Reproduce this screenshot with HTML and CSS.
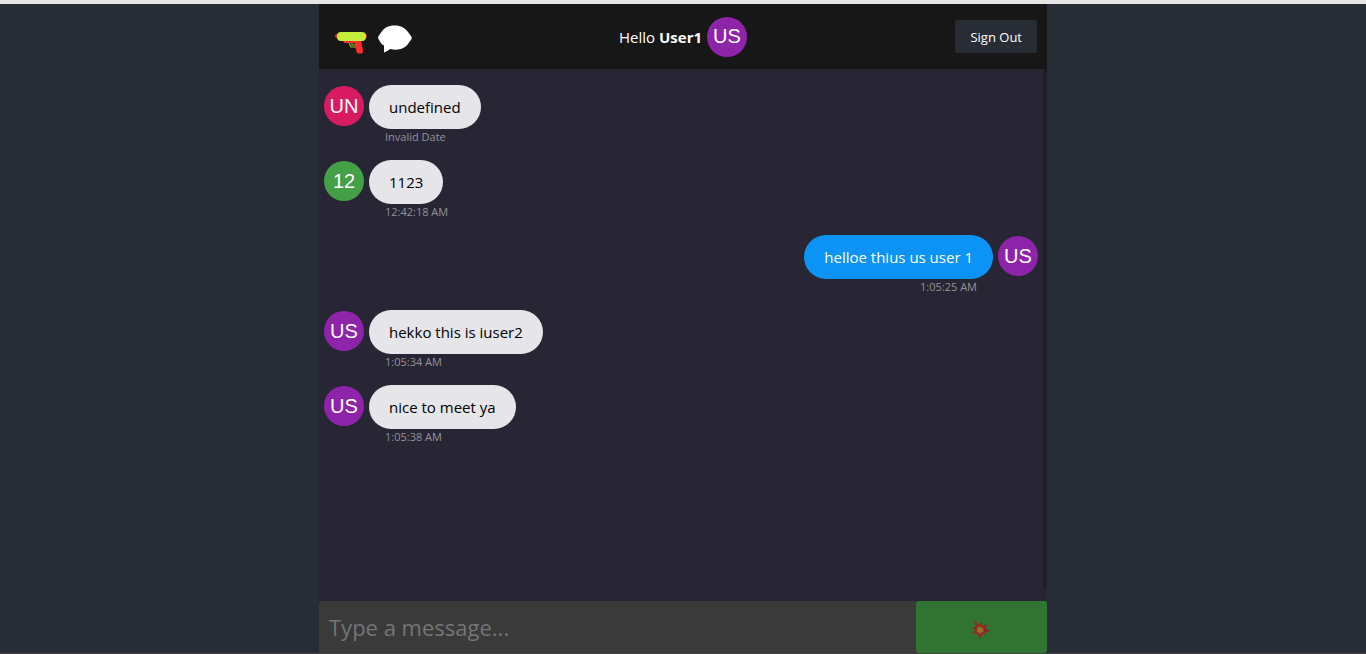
FILE: index.html
```html
<!DOCTYPE html>
<html lang="en">
<head>
    <meta charset="UTF-8">
    <meta name="viewport" content="width=device-width, initial-scale=1.0">
    <title>Chat</title>
    <link rel="stylesheet" href="styles.css">
</head>
<body>
    <div class="app">
        <header class="header">
            <div class="logo">
                <svg width="32" height="32" viewBox="0 0 32 32" aria-hidden="true">
                    <path d="M13.500 19l2.500 5h6M17 19v3h4" fill="none" stroke="#8dbb25" stroke-width="1.200"/>
                    <path d="M8 17h18l2 11q.5 2-1.500 2.500h-3q-1.500 0-2-2l-2-8.500H9z" fill="#ff2d2a"/>
                    <rect x="0" y="11" width="32" height="4" rx="2" fill="#f1302b"/>
                    <rect x="2" y="9" width="29" height="9" rx="4" fill="#c2ee39"/>
                </svg>
                <svg width="34" height="28" viewBox="0 0 34 28" aria-hidden="true">
                    <path d="M17 .5C10 .5 6 3 3 7.500L.3 11.500q-.5 1.500.5 3C2.500 18 4 19.500 6 20.500V27.500q3-.5 6-3.500c9 2 15-1 18-5l3.500-5q.5-1.500-.5-3L30 7C27 3 23 .5 17 .5z" fill="#fff"/>
                </svg>
            </div>
            <div class="greeting">
                <span>Hello <strong>User1</strong></span>
                <span class="avatar purple">US</span>
            </div>
            <button class="sign-out" type="button">Sign Out</button>
        </header>

        <main class="messages">
            <div class="message received">
                <span class="avatar pink">UN</span>
                <div class="content">
                    <p class="bubble">undefined</p>
                    <span class="time">Invalid Date</span>
                </div>
            </div>
            <div class="message received">
                <span class="avatar green">12</span>
                <div class="content">
                    <p class="bubble">1123</p>
                    <span class="time">12:42:18 AM</span>
                </div>
            </div>
            <div class="message sent">
                <span class="avatar purple">US</span>
                <div class="content">
                    <p class="bubble">helloe thius us user 1</p>
                    <span class="time">1:05:25 AM</span>
                </div>
            </div>
            <div class="message received">
                <span class="avatar purple">US</span>
                <div class="content">
                    <p class="bubble">hekko this is iuser2</p>
                    <span class="time">1:05:34 AM</span>
                </div>
            </div>
            <div class="message received">
                <span class="avatar purple">US</span>
                <div class="content">
                    <p class="bubble">nice to meet ya</p>
                    <span class="time">1:05:38 AM</span>
                </div>
            </div>
        </main>

        <form class="send-form">
            <input class="send-input" type="text" placeholder="Type a message..." aria-label="Message">
            <button class="send-button" type="submit" aria-label="Send" disabled>
                <svg width="18" height="20" viewBox="0 0 18 20" aria-hidden="true">
                    <path d="M2 0l5 5 2.500-3.500.5 4 6-1-2.500 3.500L18 11.500l-5 .5 1 3-4-1-2.500 6L6 14l-6-1 3.500-3L0 7.500l4-.5z" fill="#932722"/>
                    <path d="M5.500 6l2 1.500L9 6l1 2.500 2 .5-1 1.500 1 1.500-3 .5-1 2-1-2-2.500-.5 1-2-1-1.500 1.500-.5z" fill="#93702a"/>
                </svg>
            </button>
        </form>
    </div>
</body>
</html>
```

FILE: styles.css
```css
* {
    box-sizing: border-box;
}
body {
    margin: 0;
    background-color: #282c34;
    color: white;
    font-family: "Open Sans", "Noto Sans", sans-serif;
    font-size: 15px;
}
.app {
    display: flex;
    flex-direction: column;
    height: 100vh;
    border-top: 4px solid #e6e6e6;
    border-bottom: 1px solid #444444;
    padding: 0 calc(50% - 364px);
}
.header {
    display: grid;
    grid-template-columns: 1fr auto 1fr;
    align-items: center;
    flex: none;
    height: 65px;
    padding: 0 10px;
    background-color: #181717;
}
.logo {
    display: flex;
    align-items: center;
    gap: 11px;
    padding: 4px 0 0 6px;
}
.greeting {
    display: flex;
    align-items: center;
    gap: 5px;
}
.avatar {
    display: flex;
    align-items: center;
    justify-content: center;
    flex: none;
    width: 40px;
    height: 40px;
    border-radius: 50%;
    font-family: "Liberation Sans", Arial, sans-serif;
    font-size: 20px;
}
.pink {
    background-color: #d81b60;
}
.green {
    background-color: #43a047;
}
.purple {
    background-color: #8e24aa;
}
button {
    border: none;
    color: white;
    font-family: inherit;
    cursor: pointer;
}
.sign-out {
    justify-self: end;
    height: 33px;
    padding: 0 15px;
    border-radius: 2px;
    background-color: #282c34;
    font-size: 13px;
}
.messages {
    display: flex;
    flex-direction: column;
    flex: 1;
    gap: 15px;
    padding: 16px 5px;
    border-right: 4px solid #1e1e24;
    background-color: #282535;
    overflow: hidden;
}
.message {
    display: flex;
    gap: 5px;
}
.message .avatar {
    margin-top: 1px;
}
.sent {
    flex-direction: row-reverse;
}
.content {
    display: flex;
    flex-direction: column;
    align-items: flex-start;
}
.sent .content {
    align-items: flex-end;
}
.bubble {
    max-width: 500px;
    margin: 0;
    padding: 10px 20px;
    border-radius: 25px;
    line-height: 24px;
    background-color: #e5e5ea;
    color: black;
}
.sent .bubble {
    background-color: #0b93f6;
    color: white;
}
.time {
    padding: 0 16px;
    font-size: 11px;
    line-height: 16px;
    color: #949398;
}
.send-form {
    display: flex;
    flex: none;
    height: 65px;
    padding-top: 13px;
    background-color: #282535;
}
.send-input {
    flex: 1;
    min-width: 0;
    padding: 0 10px;
    border: none;
    border-radius: 2px;
    background-color: #3a3a3a;
    color: white;
    font-family: inherit;
    font-size: 22px;
}
.send-input::placeholder {
    color: #757575;
}
.send-button {
    display: flex;
    align-items: center;
    justify-content: center;
    width: 18%;
    padding: 6px 0 0;
    border-radius: 2px;
    background-color: #307332;
}
```
